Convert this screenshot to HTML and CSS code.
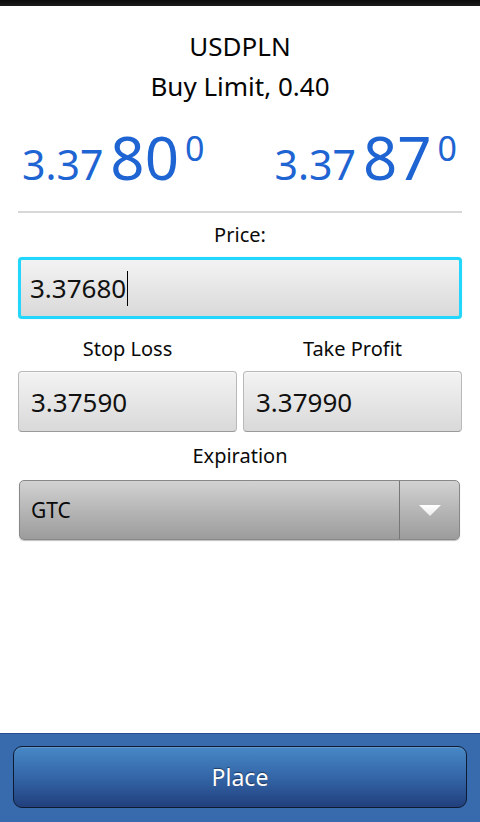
FILE: index.html
```html
<!DOCTYPE html>
<html lang="en">
<head>
<meta charset="utf-8">
<title>USDPLN Buy Limit</title>
<link rel="stylesheet" href="styles.css">
</head>
<body>
<div class="screen">
  <div class="statusbar"></div>
  <main class="content">
    <div class="title">
      <div class="title-line">USDPLN</div>
      <div class="title-line">Buy Limit, 0.40</div>
    </div>
    <div class="quotes">
      <div class="quote"><span class="q-small">3.37</span><span class="q-big">80</span><span class="q-sup">0</span></div>
      <div class="quote"><span class="q-small">3.37</span><span class="q-big">87</span><span class="q-sup">0</span></div>
    </div>
    <div class="divider"></div>
    <div class="label label-price">Price:</div>
    <div class="field field-focus"><span class="field-text">3.37680</span><span class="cursor"></span></div>
    <div class="pair">
      <div class="col">
        <div class="label">Stop Loss</div>
        <div class="field field-small"><span class="field-text">3.37590</span></div>
      </div>
      <div class="col">
        <div class="label">Take Profit</div>
        <div class="field field-small"><span class="field-text">3.37990</span></div>
      </div>
    </div>
    <div class="label label-exp">Expiration</div>
    <div class="spinner">
      <span class="spinner-text">GTC</span>
      <span class="spinner-btn">
        <svg width="22" height="11" viewBox="0 0 22 11">
          <defs>
            <linearGradient id="tri" x1="0" y1="0" x2="0" y2="1">
              <stop offset="0" stop-color="#ffffff"/>
              <stop offset="1" stop-color="#ececec"/>
            </linearGradient>
          </defs>
          <polygon points="0,0 22,0 11,11" fill="url(#tri)"/>
        </svg>
      </span>
    </div>
  </main>
  <footer class="actionbar">
    <button class="place" type="button">Place</button>
  </footer>
</div>
</body>
</html>
```
FILE: styles.css
```css
* { box-sizing: border-box; }
html, body {
  margin: 0;
  padding: 0;
  background: #ffffff;
}
body {
  font-family: "Noto Sans", "Open Sans", "DejaVu Sans", sans-serif;
  color: #000;
}
.screen {
  width: 480px;
  height: 822px;
  display: flex;
  flex-direction: column;
  overflow: hidden;
}
.statusbar {
  height: 6px;
  flex: none;
  background: linear-gradient(#0a0a0a, #1c1c1c);
}
.content {
  flex: 1;
  padding: 20px 18px 0;
  display: flex;
  flex-direction: column;
}
.title {
  text-align: center;
  font-size: 26px;
  line-height: 40px;
  color: #050505;
}
.quotes {
  margin-top: 21px;
  height: 60px;
  display: flex;
  justify-content: space-between;
  padding: 0 5px 0 4px;
  color: #1e64d2;
}
.quote {
  display: flex;
  align-items: baseline;
}
.q-small {
  font-size: 41px;
  line-height: 1;
}
.q-big {
  font-size: 60px;
  line-height: 1;
  margin-left: 7px;
}
.q-sup {
  font-size: 34px;
  line-height: 1;
  align-self: flex-start;
  margin-top: 4px;
  margin-left: 6px;
}
.divider {
  margin-top: 24px;
  height: 2px;
  background: #d8d8d8;
}
.label {
  text-align: center;
  font-size: 20px;
  line-height: 28px;
  color: #0a0a0a;
}
.label-price { margin-top: 8px; }
.field {
  margin-top: 8px;
  display: flex;
  align-items: center;
  font-size: 26px;
  line-height: 36px;
  color: #111;
  background: linear-gradient(#f3f3f3, #e6e6e6 50%, #d9d9d9);
}
.field-focus {
  height: 62px;
  border: 3px solid #23d6fb;
  border-radius: 4px;
  padding-left: 9px;
  box-shadow: 0 0 1px #7fe6ff;
}
.cursor {
  display: inline-block;
  width: 1px;
  height: 35px;
  background: #000;
  margin-left: 1px;
}
.pair {
  margin-top: 16px;
  display: flex;
  gap: 6px;
}
.col {
  flex: 1;
  display: flex;
  flex-direction: column;
}
.field-small {
  height: 61px;
  border: 1px solid #b9b9b9;
  border-bottom-color: #9a9a9a;
  border-radius: 4px;
  padding-left: 12px;
  box-shadow: inset 0 1px 0 #fafafa;
}
.label-exp { margin-top: 10px; }
.spinner {
  margin: 10px 2px 0 1px;
  height: 60px;
  display: flex;
  border: 1px solid #888;
  border-radius: 5px;
  background: linear-gradient(#d2d2d2, #b6b6b6 50%, #9c9c9c);
  box-shadow: 0 1px 1px rgba(0,0,0,0.25);
}
.spinner-text {
  flex: 1;
  display: flex;
  align-items: center;
  padding-left: 11px;
  font-size: 21px;
  color: #0a0a0a;
}
.spinner-btn {
  width: 60px;
  display: flex;
  align-items: center;
  justify-content: center;
  border-left: 1px solid #777;
  padding-top: 1px;
}
.actionbar {
  flex: none;
  height: 89px;
  background: #386aae;
  border-top: 1px solid #244f93;
  padding: 12px 13px 0;
}
.place {
  display: block;
  width: 454px;
  height: 62px;
  border: 1.5px solid #0e1a30;
  border-radius: 9px;
  background: linear-gradient(#4788c5, #3466a8 50%, #213f7c);
  box-shadow: inset 0 1px 0 rgba(255,255,255,0.15);
  font-family: "Noto Sans", "Open Sans", "DejaVu Sans", sans-serif;
  font-size: 23px;
  color: #ffffff;
  text-shadow: 0 -1px 1px rgba(0,0,0,0.45);
  padding: 0;
  cursor: pointer;
}
```
